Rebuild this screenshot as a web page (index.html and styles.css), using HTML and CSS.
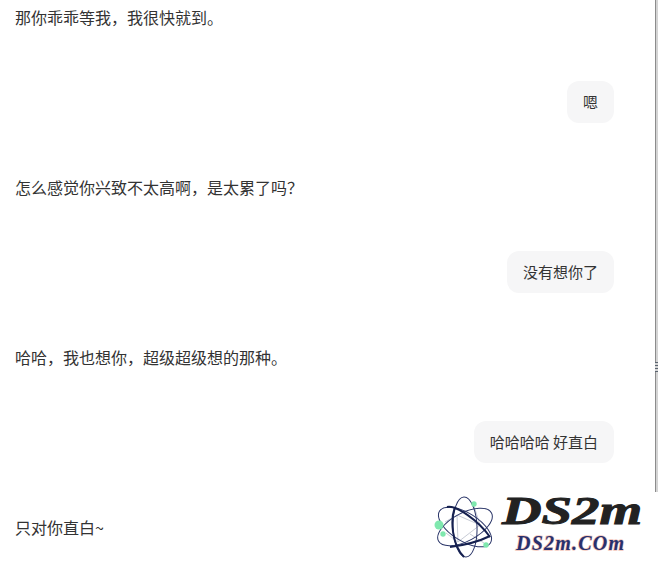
FILE: index.html
```html
<!DOCTYPE html>
<html lang="zh-CN">
<head>
  <meta charset="UTF-8">
  <title>聊天记录</title>
  <link rel="stylesheet" href="styles.css">
</head>
<body>

<div class="scroll-edge">
  <div class="scroll-grip"></div>
</div>

<div class="chat-window">
  <div class="message bot">那你乖乖等我，我很快就到。</div>
  <div class="message user">嗯</div>
  <div class="message bot">怎么感觉你兴致不太高啊，是太累了吗？</div>
  <div class="message user">没有想你了</div>
  <div class="message bot">哈哈，我也想你，超级超级想的那种。</div>
  <div class="message user">哈哈哈哈 好直白</div>
  <div class="message bot">只对你直白~</div>
</div>

<div class="watermark">
  <svg class="logo" viewBox="430 473 228 88" width="228" height="88">
    <g fill="none">
      <path class="bond" d="M457 515 L480 525 L458 542 Z"/>
      <path class="bond" d="M445 522 L457 515 M446 533 L458 542 M474 506 L480 525 M484 543 L470 534"/>
      <ellipse class="orbit" cx="465" cy="527" rx="30" ry="14" transform="rotate(32 465 527)"/>
      <ellipse class="orbit" cx="465" cy="527" rx="30" ry="14" transform="rotate(-28 465 527)"/>
      <ellipse class="orbit" cx="465" cy="527" rx="30" ry="12" transform="rotate(88 465 527)"/>
      <path class="orbit-thick" d="M447 507 C456 505 478 520 490 537"/>
      <path class="orbit-thick" d="M455 507 C450 520 452 545 464 557"/>
      <path class="orbit-thick" d="M490 536 C480 541 465 545 450 547"/>
    </g>
    <g class="atom">
      <circle cx="439" cy="525" r="4.5"/>
      <circle cx="443" cy="534" r="2.7"/>
      <circle cx="474" cy="504" r="2.7"/>
      <circle cx="486" cy="545" r="2.7"/>
    </g>
    <text class="brand" x="502" y="524" textLength="140" lengthAdjust="spacingAndGlyphs">DS2m</text>
    <text class="domain" x="516" y="550" textLength="108" lengthAdjust="spacing">DS2m.COm</text>
  </svg>
</div>

</body>
</html>
```

FILE: styles.css
```css
body {
  margin: 0;
  height: 561px;
  overflow: hidden;
  position: relative;
  background: #fff;
  font-family: "Noto Sans CJK SC", "Liberation Sans", sans-serif;
  color: #333;
}

.scroll-edge {
  position: absolute;
  top: 0;
  right: 0;
  width: 3px;
  height: 492px;
  background: linear-gradient(90deg, #8c8c8c 1px, #d4d4d4 1px);
}

.scroll-grip {
  position: absolute;
  top: 362px;
  right: 0;
  width: 3px;
  height: 10px;
  background: repeating-linear-gradient(180deg, #5b6470 0 1px, #d4d4d4 1px 3px);
}

.chat-window {
  display: flex;
  flex-direction: column;
  gap: 43px;
  width: 614px;
  margin-top: -4px;
  padding-left: 15px;
  box-sizing: border-box;
}

.message {
  font-size: 16px;
  line-height: 26px;
  padding: 8px 0;
}

.message.user {
  align-self: flex-end;
  padding: 8px 16px;
  font-size: 15px;
  background-color: #f6f6f7;
  border-radius: 12px;
}

.watermark {
  position: absolute;
  right: 0;
  bottom: 0;
  width: 228px;
  height: 88px;
}

.logo {
  display: block;
}

.orbit {
  stroke: #2a3568;
  stroke-width: 1;
}

.orbit-thick {
  stroke: #15204f;
  stroke-width: 2;
}

.bond {
  stroke: #c8ccd6;
  stroke-width: 1;
}

.atom {
  fill: #7fe8ae;
}

.brand {
  font-family: "Liberation Serif", serif;
  font-weight: bold;
  font-style: italic;
  font-size: 41px;
  fill: #222;
  stroke: #222;
  stroke-width: 1;
}

.domain {
  font-family: "Liberation Serif", serif;
  font-style: italic;
  font-weight: bold;
  font-size: 20px;
  fill: #27306e;
  stroke: #f3c7bb;
  stroke-width: 1.4;
  paint-order: stroke;
}
```
